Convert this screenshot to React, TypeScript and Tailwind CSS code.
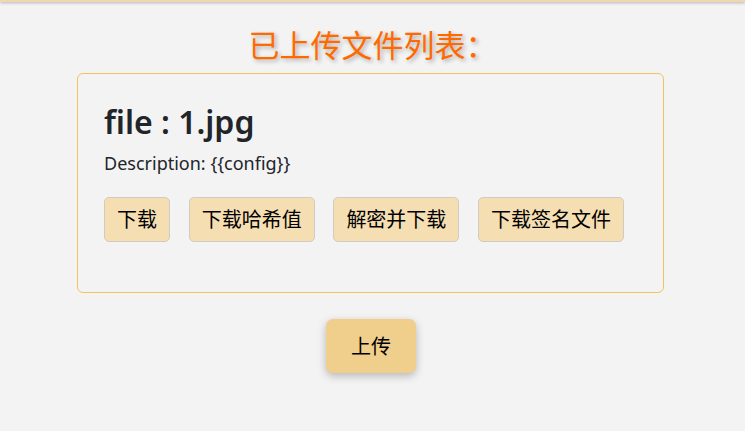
export default function App() {
  const latin = "font-['Noto_Sans','Noto_Sans_CJK_SC',sans-serif]";
  const buttons = ["下载", "下载哈希值", "解密并下载", "下载签名文件"];
  return (
    <div className={`min-h-screen bg-[#f3f3f3] ${latin}`}>
      <div className="h-[2px] bg-[#f2d6b2] shadow-[0_1px_3px_rgba(0,0,0,0.3)]" />
      <h2 className="mt-[24px] text-center text-[31px] leading-[36px] text-[#ff6a00] font-['Noto_Sans_CJK_SC',sans-serif] [text-shadow:2px_2px_4px_rgba(0,0,0,0.3)]">
        已上传文件列表：
      </h2>
      <div className="ml-[77px] mt-[11px] w-[587px] h-[220px] rounded-[6px] border border-[#f3c25c] px-[26px] pt-[28px]">
        <div className="text-[32px] leading-[40px] font-semibold text-[#212529]">file : 1.jpg</div>
        <div className="mt-[8px] text-[18px] leading-[26px] text-[#212529]">Description: {"{{config}}"}</div>
        <div className="mt-[21px] flex gap-[18.7px]">
          {buttons.map((b) => (
            <button
              key={b}
              className="rounded-[5px] border border-[#d0cbc0] bg-[#f6deb3] px-3 py-[9.35px] text-[20px] leading-6 text-black font-['Noto_Sans_CJK_SC',sans-serif]"
            >
              {b}
            </button>
          ))}
        </div>
      </div>
      <div className="mt-[26px] flex justify-center">
        <button className="ml-[-3px] rounded-[7px] bg-[#f0ce8b] px-[25px] py-[15px] text-[20px] leading-6 text-black shadow-[0_3px_8px_rgba(0,0,0,0.25)] font-['Noto_Sans_CJK_SC',sans-serif]">
          上传
        </button>
      </div>
    </div>
  );
}
